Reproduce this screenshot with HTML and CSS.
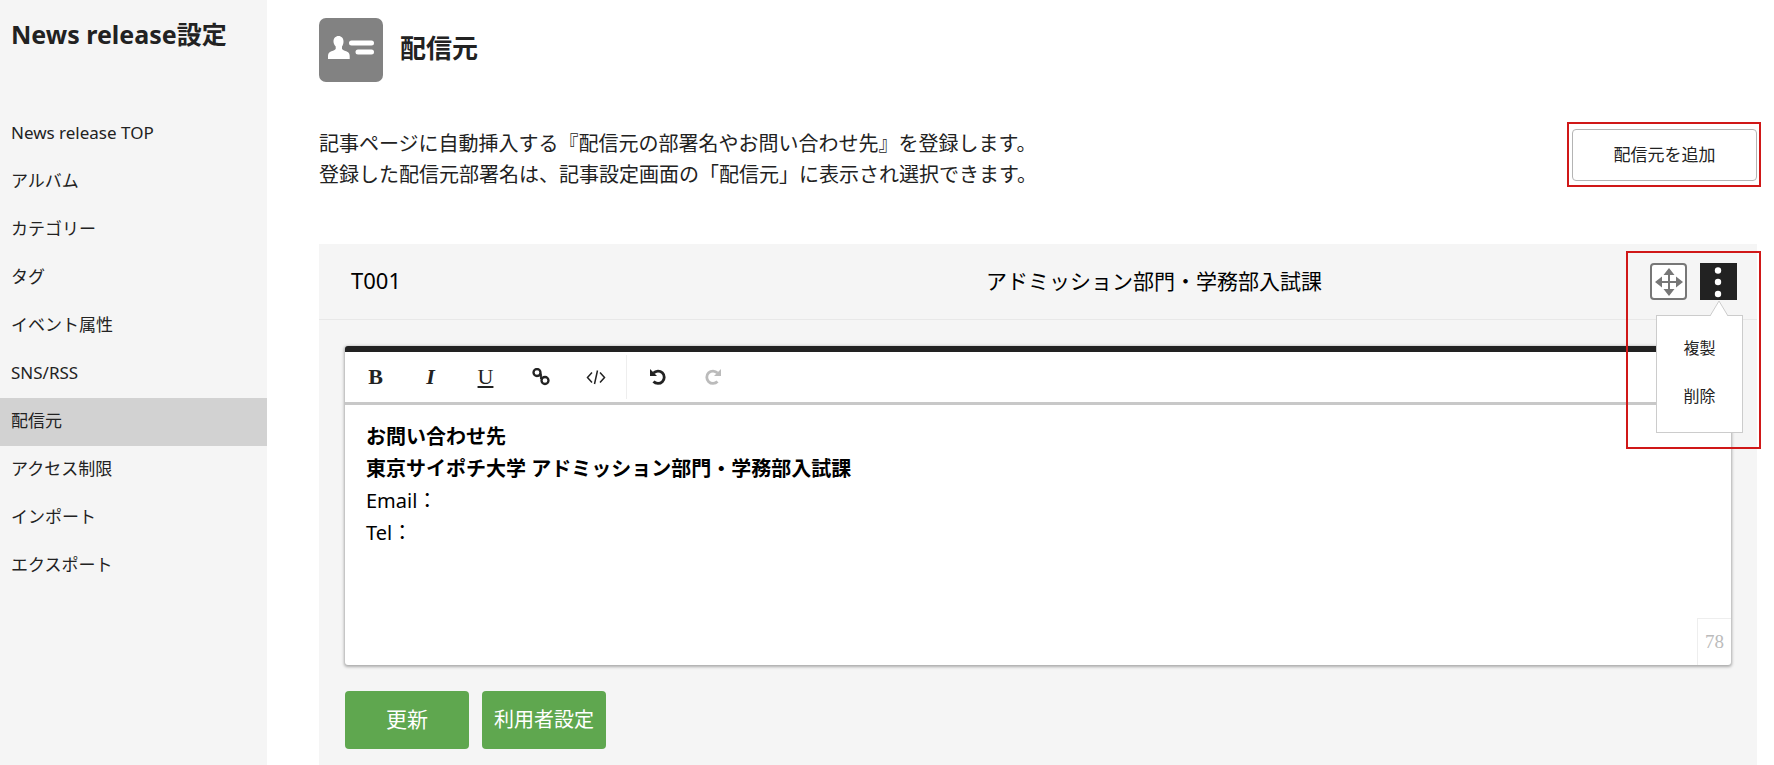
FILE: index.html
```html
<!DOCTYPE html>
<html lang="ja">
<head>
    <title>配信元 - News release設定</title>
    <meta charset="UTF-8">
    <meta name="viewport" content="width=device-width, initial-scale=1">
    <link rel="stylesheet" href="styles.css">
</head>
<body>
<div class="layout">
    <aside class="sidebar">
        <h1 class="sidebar__title">News release設定</h1>
        <nav>
            <ul class="menu">
                <li><a class="menu__link" href="#">News release TOP</a></li>
                <li><a class="menu__link" href="#">アルバム</a></li>
                <li><a class="menu__link" href="#">カテゴリー</a></li>
                <li><a class="menu__link" href="#">タグ</a></li>
                <li><a class="menu__link" href="#">イベント属性</a></li>
                <li><a class="menu__link" href="#">SNS/RSS</a></li>
                <li><a class="menu__link menu__link--current" href="#" aria-current="page">配信元</a></li>
                <li><a class="menu__link" href="#">アクセス制限</a></li>
                <li><a class="menu__link" href="#">インポート</a></li>
                <li><a class="menu__link" href="#">エクスポート</a></li>
            </ul>
        </nav>
    </aside>

    <main class="main">
        <header class="page-head">
            <svg class="page-head__icon" viewBox="0 0 64 64" aria-hidden="true">
                <rect width="64" height="64" rx="7" fill="#828282"/>
                <path fill="#fff" d="M19.500 18c3 0 5 2.300 5 5.500 0 2-.6 3.800-1.500 5v2.500c1.200 1.700 4 2 5.700 3 1.500.900 2 2.500 2 4.500v2.500H9V38.500c0-2 .5-3.600 2-4.500 1.700-1 4.500-1.300 5.700-3v-2.500c-1.200-1.200-2.200-3-2.200-5 0-3.200 2-5.500 5-5.500z"/>
                <path stroke="#fff" stroke-width="5" stroke-linecap="round" d="M32.500 25h20M39 34h13.500"/>
            </svg>
            <h2 class="page-head__title">配信元</h2>
        </header>

        <div class="intro">
            <p class="intro__text">記事ページに自動挿入する『配信元の部署名やお問い合わせ先』を登録します。<br>登録した配信元部署名は、記事設定画面の「配信元」に表示され選択できます。</p>
            <div class="marked marked--add">
                <button class="btn-add" type="button">配信元を追加</button>
            </div>
        </div>

        <section class="panel">
            <div class="panel__head">
                <span class="panel__code">T001</span>
                <span class="panel__name">アドミッション部門・学務部入試課</span>
                <div class="panel__actions marked marked--actions">
                    <button class="icon-btn icon-btn--move" type="button" aria-label="移動">
                        <svg viewBox="0 0 28 28" width="28" height="28" fill="#777">
                            <path d="M14 0l5.500 7H15v6h6V8.500l7 5.500-7 5.500V15h-6v6h4.500L14 28l-5.500-7H13v-6H7v4.500L0 14l7-5.500V13h6V7H8.500z"/>
                        </svg>
                    </button>
                    <button class="icon-btn icon-btn--more" type="button" aria-label="メニュー" aria-expanded="true">
                        <svg viewBox="0 0 37 37" width="37" height="37" fill="#fff">
                            <circle cx="18" cy="7.500" r="3.200"/>
                            <circle cx="18" cy="19" r="3.200"/>
                            <circle cx="18" cy="31" r="3.200"/>
                        </svg>
                    </button>
                    <div class="dropdown">
                        <svg class="dropdown__arrow" viewBox="0 0 18 16" width="18" height="16">
                            <path d="M0 16L9 1l9 15" fill="#fff" stroke="#ccc"/>
                        </svg>
                        <button class="dropdown__item" type="button">複製</button>
                        <button class="dropdown__item" type="button">削除</button>
                    </div>
                </div>
            </div>

            <div class="panel__body">
                <div class="editor">
                    <div class="toolbar">
                        <button class="tool tool--bold" type="button" aria-label="太字">B</button>
                        <button class="tool tool--italic" type="button" aria-label="斜体">I</button>
                        <button class="tool tool--underline" type="button" aria-label="下線">U</button>
                        <button class="tool" type="button" aria-label="リンク">
                            <svg viewBox="0 0 18 18" width="18" height="18" fill="none" stroke="#222">
                                <g stroke-width="2.300">
                                    <circle cx="5" cy="4.500" r="3.500"/>
                                    <circle cx="13" cy="12.500" r="3.500"/>
                                </g>
                                <path d="M6 8l4-1M8 10.500l4-1.500M9 5.500v5" stroke-width="1.800"/>
                            </svg>
                        </button>
                        <button class="tool" type="button" aria-label="ソース">
                            <svg viewBox="0 0 20 18" width="20" height="18" fill="none" stroke="#222" stroke-width="1.500">
                                <path d="M6 4.500L1.500 9.500 6 14.500M14 4.500l4.500 5-4.500 5M11.500 2.500l-3 13.500"/>
                            </svg>
                        </button>
                        <span class="toolbar__sep"></span>
                        <button class="tool" type="button" aria-label="元に戻す">
                            <svg viewBox="0 0 18 18" width="18" height="18">
                                <path d="M4.500 5A6.200 6.200 0 1 1 4.500 13.500" fill="none" stroke="#222" stroke-width="2.800"/>
                                <path d="M1 1v7h7z" fill="#222"/>
                            </svg>
                        </button>
                        <button class="tool" type="button" aria-label="やり直す" disabled>
                            <svg viewBox="0 0 18 18" width="18" height="18">
                                <path d="M13.500 5A6.200 6.200 0 1 0 13.500 13.500" fill="none" stroke="#bbb" stroke-width="2.800"/>
                                <path d="M17 1v7h-7z" fill="#bbb"/>
                            </svg>
                        </button>
                    </div>
                    <div class="editor__area" contenteditable="true" role="textbox" aria-multiline="true" aria-label="本文" spellcheck="false">
                        <div><b>お問い合わせ先</b></div>
                        <div><b>東京サイポチ大学 アドミッション部門・学務部入試課</b></div>
                        <div>Email：</div>
                        <div>Tel：</div>
                    </div>
                    <span class="editor__count">78</span>
                </div>

                <div class="buttons">
                    <button class="btn btn--large" type="submit">更新</button>
                    <button class="btn" type="button">利用者設定</button>
                </div>
            </div>
        </section>
    </main>
</div>
</body>
</html>
```
FILE: styles.css
```css
* {
    box-sizing: border-box;
}

body {
    margin: 0;
    background-color: #fff;
    color: #222;
    font-family: "Noto Sans", "Noto Sans CJK JP", sans-serif;
    font-size: 17px;
}

button {
    margin: 0;
    padding: 0;
    border: 0;
    background: none;
    color: inherit;
    font: inherit;
    cursor: pointer;
}

h1, h2, p, ul {
    margin: 0;
    padding: 0;
}

.layout {
    display: flex;
    min-height: 100vh;
}

/* sidebar */
.sidebar {
    flex: 0 0 267px;
    padding-top: 15px;
    background-color: #f5f5f5;
}

.sidebar__title {
    margin-bottom: 57px;
    padding: 0 11px;
    font-size: 25px;
    line-height: 38px;
    white-space: nowrap;
}

.menu {
    list-style: none;
}

.menu__link {
    display: block;
    padding: 0 11px 2px;
    color: #222;
    line-height: 46px;
    text-decoration: none;
}

.menu__link:hover,
.menu__link--current {
    background-color: #d2d2d2;
}

/* main */
.main {
    display: flex;
    flex: 1;
    flex-direction: column;
    min-width: 0;
    padding: 18px 17px 0 52px;
}

.page-head {
    display: flex;
    align-items: center;
    gap: 17px;
    margin-bottom: 46px;
}

.page-head__icon {
    width: 64px;
    height: 64px;
}

.page-head__title {
    padding-bottom: 4px;
    font-size: 26px;
    line-height: 40px;
}

.intro {
    display: flex;
    align-items: flex-start;
    justify-content: space-between;
    gap: 24px;
    margin-bottom: 54px;
}

.intro__text {
    font-size: 20px;
    line-height: 31px;
}

.marked {
    position: relative;
}

.marked::after {
    position: absolute;
    border: 2px solid #d01818;
    content: "";
    pointer-events: none;
}

.marked--add {
    margin-top: 1px;
}

.marked--add::after {
    inset: -7px -4px -6px -5px;
}

.marked--actions::after {
    inset: -12px -24px -149px;
    z-index: 3;
}

.btn-add {
    width: 185px;
    height: 52px;
    padding-bottom: 4px;
    border: 1px solid #b4b4b4;
    border-radius: 4px;
    background-color: #fff;
}

/* panel */
.panel {
    flex: 1;
    background-color: #f5f5f5;
}

.panel__head {
    display: grid;
    grid-template-columns: 44fr 46fr 87px;
    align-items: center;
    height: 76px;
    padding: 0 20px 0 32px;
    border-bottom: 1px solid #e8e8e8;
    color: #000;
}

.panel__code {
    padding-bottom: 4px;
    font-size: 22px;
}

.panel__name {
    padding-bottom: 4px;
    font-size: 21px;
}

.panel__actions {
    display: flex;
    justify-content: space-between;
}

.icon-btn {
    display: flex;
    align-items: center;
    justify-content: center;
    width: 37px;
    height: 37px;
}

.icon-btn--move {
    border: 2px solid #777;
    border-radius: 4px;
    background-color: #fff;
}

.icon-btn--more {
    background-color: #222;
}

.dropdown {
    position: absolute;
    top: 52px;
    right: -6px;
    z-index: 2;
    width: 87px;
    padding: 8px 0 12px;
    border: 1px solid #ccc;
    background-color: #fff;
    color: #222;
}

.dropdown__arrow {
    position: absolute;
    top: -16px;
    right: 14px;
}

.dropdown__item {
    display: block;
    width: 100%;
    font-size: 16px;
    line-height: 48px;
    text-align: center;
}

.panel__body {
    padding: 26px 26px 16px;
}

.editor {
    position: relative;
    margin-bottom: 26px;
    border-top: 6px solid #222;
    border-radius: 3px;
    background-color: #fff;
    box-shadow: 0 1px 3px 1px rgba(0, 0, 0, .3);
}

.toolbar {
    display: flex;
    align-items: center;
    height: 53px;
    padding: 0 3px;
    border-bottom: 3px solid #c8c8c8;
}

.tool {
    display: flex;
    align-items: center;
    justify-content: center;
    width: 55px;
    height: 50px;
    font-family: "Liberation Serif", serif;
    font-size: 22px;
}

.tool--bold {
    font-weight: bold;
}

.tool--italic {
    font-style: italic;
    font-weight: bold;
}

.tool--underline {
    text-decoration: underline;
}

.toolbar__sep {
    height: 44px;
    margin: 0 3px;
    border-left: 1px solid #eee;
}

.editor__area {
    min-height: 260px;
    padding: 16px 21px;
    color: #000;
    font-size: 20px;
    line-height: 32px;
    outline: none;
}

.editor__count {
    position: absolute;
    right: 0;
    bottom: 0;
    width: 34px;
    border: 1px solid #eee;
    border-width: 1px 0 0 1px;
    color: #bbb;
    font-family: "Liberation Serif", serif;
    font-size: 19px;
    line-height: 46px;
    text-align: center;
}

.buttons {
    display: flex;
    gap: 13px;
}

.btn {
    width: 124px;
    height: 58px;
    padding-bottom: 4px;
    border-radius: 4px;
    background-color: #5fa74f;
    color: #fff;
    font-size: 20px;
}

.btn--large {
    font-size: 21px;
}
```
